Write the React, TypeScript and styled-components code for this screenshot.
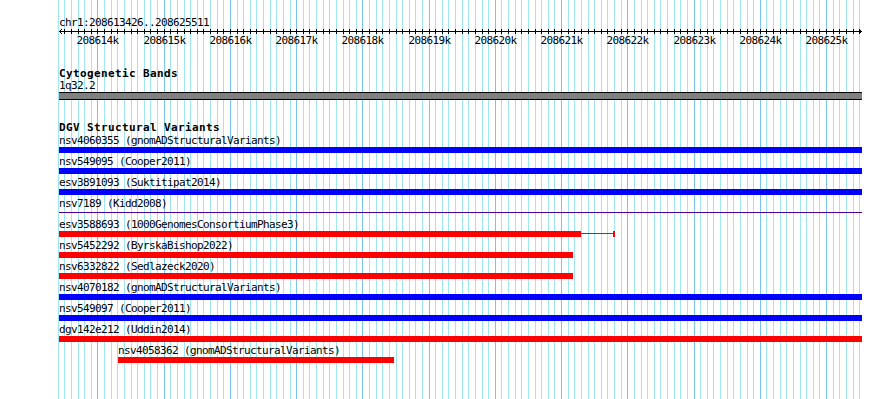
import React from "react";
import styled, { createGlobalStyle } from "styled-components";

const GlobalStyle = createGlobalStyle`
  html, body { margin: 0; padding: 0; background: #ffffff; }
  body { font-family: "DejaVu Sans Mono", "Liberation Mono", monospace; color: #000; }
`;

const VIEW_W = 890;
const VIEW_H = 399;
const TRACK_LEFT = 59;
const TRACK_W = 803;
const PX_PER_KB = 66.245;
const MAJOR0_X = 97.4; // x of 208614k
const bpToX = (bp: number) => MAJOR0_X + ((bp - 208614000) * PX_PER_KB) / 1000;

const gridStops: { x: number; major: boolean }[] = [];
for (let bp = 208613400; bp <= 208625500; bp += 100) {
  gridStops.push({ x: Math.round(bpToX(bp)), major: bp % 1000 === 0 });
}
const majors = gridStops.filter((g) => g.major);

type Feature = {
  name: string;
  src: string;
  kind: "blue" | "red" | "line";
  left: number;
  width: number;
  tail?: number;
};

const FULL = { left: 0, width: TRACK_W };
const features: Feature[] = [
  { name: "nsv4060355", src: "gnomADStructuralVariants", kind: "blue", ...FULL },
  { name: "nsv549095", src: "Cooper2011", kind: "blue", ...FULL },
  { name: "esv3891093", src: "Suktitipat2014", kind: "blue", ...FULL },
  { name: "nsv7189", src: "Kidd2008", kind: "line", ...FULL },
  { name: "esv3588693", src: "1000GenomesConsortiumPhase3", kind: "red", left: 0, width: 522, tail: 32 },
  { name: "nsv5452292", src: "ByrskaBishop2022", kind: "red", left: 0, width: 514 },
  { name: "nsv6332822", src: "Sedlazeck2020", kind: "red", left: 0, width: 514 },
  { name: "nsv4070182", src: "gnomADStructuralVariants", kind: "blue", ...FULL },
  { name: "nsv549097", src: "Cooper2011", kind: "blue", ...FULL },
  { name: "dgv142e212", src: "Uddin2014", kind: "red", ...FULL },
  { name: "nsv4058362", src: "gnomADStructuralVariants", kind: "red", left: 59, width: 276 },
];

const Canvas = styled.div`
  position: relative;
  width: ${VIEW_W}px;
  height: ${VIEW_H}px;
  overflow: hidden;
  background: #ffffff;
`;

const GridLayer = styled.svg`
  position: absolute;
  top: 0;
  left: 0;
  z-index: 0;
  display: block;
`;

const Tracks = styled.div`
  position: relative;
  z-index: 1;
  width: ${TRACK_W}px;
  padding-left: ${TRACK_LEFT}px;
  display: flex;
  flex-direction: column;
`;

const SmallText = styled.div<{ $lh?: number }>`
  font-family: "DejaVu Sans Mono", "Liberation Mono", monospace;
  font-size: 11px;
  letter-spacing: -0.6226px;
  line-height: ${(p) => p.$lh ?? 12}px;
  height: ${(p) => p.$lh ?? 12}px;
  white-space: nowrap;
  color: #000;
`;

const TrackTitle = styled.div<{ $mt: number }>`
  font-family: "DejaVu Sans Mono", "Liberation Mono", monospace;
  font-weight: bold;
  font-size: 11px;
  letter-spacing: 0.3774px;
  line-height: 12px;
  height: 12px;
  margin-top: ${(p) => p.$mt}px;
  white-space: nowrap;
`;

const RulerSection = styled.div`
  padding-top: 17px;
  display: flex;
  flex-direction: column;
`;

const Axis = styled.svg`
  display: block;
`;

const TickLabels = styled.div`
  position: relative;
  height: 11px;
`;

const TickLabel = styled(SmallText)`
  position: absolute;
  top: 0;
  transform: translateX(-50%);
`;

const BandBar = styled.div`
  height: 6px;
  width: ${TRACK_W}px;
  background: #808080;
  border-top: 1px solid #000;
  border-bottom: 1px solid #000;
`;

const FeatureRow = styled.div`
  display: flex;
  flex-direction: column;
  margin-bottom: 3px;
`;

const Glyph = styled.div`
  display: flex;
  align-items: flex-start;
  height: 6px;
`;

const Bar = styled.div<{ $color: string }>`
  height: 6px;
  background: ${(p) => p.$color};
  flex: none;
`;

const Hairline = styled.div<{ $color: string }>`
  height: 1px;
  margin-top: 2px;
  background: ${(p) => p.$color};
  flex: none;
`;

const EndCap = styled.div<{ $color: string }>`
  width: 2px;
  height: 6px;
  background: ${(p) => p.$color};
  flex: none;
`;

const COLORS = { blue: "#0000ff", red: "#ff0000", line: "#500090" };

function Grid() {
  return (
    <GridLayer width={VIEW_W} height={VIEW_H} shapeRendering="crispEdges">
      {gridStops.map((g, i) => (
        <rect key={i} x={g.x} y={0} width={1} height={VIEW_H} fill={g.major ? "#78c4f0" : "#9fe6ee"} />
      ))}
    </GridLayer>
  );
}

function Ruler() {
  const ticks = gridStops.filter((g) => g.x >= TRACK_LEFT + 2 && g.x <= TRACK_LEFT + TRACK_W - 3);
  const r = TRACK_W - 1;
  return (
    <RulerSection>
      <SmallText $lh={11}>chr1:208613426..208625511</SmallText>
      <Axis width={TRACK_W} height={7} shapeRendering="crispEdges">
        <rect x={0} y={3} width={TRACK_W} height={1} fill="#000" />
        {ticks.map((t, i) => (
          <rect key={i} x={t.x - TRACK_LEFT} y={1} width={1} height={5} fill="#000" />
        ))}
        <rect x={1} y={2} width={1} height={1} fill="#000" />
        <rect x={1} y={4} width={1} height={1} fill="#000" />
        <rect x={2} y={1} width={1} height={1} fill="#000" />
        <rect x={2} y={5} width={1} height={1} fill="#000" />
        <rect x={r - 1} y={2} width={1} height={1} fill="#000" />
        <rect x={r - 1} y={4} width={1} height={1} fill="#000" />
        <rect x={r - 2} y={1} width={1} height={1} fill="#000" />
        <rect x={r - 2} y={5} width={1} height={1} fill="#000" />
      </Axis>
      <TickLabels>
        {majors.map((m, i) => (
          <TickLabel key={i} $lh={11} style={{ left: m.x - TRACK_LEFT + 0.5 }}>
            {`${208614 + i}k`}
          </TickLabel>
        ))}
      </TickLabels>
    </RulerSection>
  );
}

function FeatureGlyph({ f }: { f: Feature }) {
  const color = COLORS[f.kind];
  if (f.kind === "line") {
    return (
      <Glyph>
        <Hairline $color={color} style={{ width: f.width }} />
      </Glyph>
    );
  }
  return (
    <Glyph>
      <Bar $color={color} style={{ width: f.width }} />
      {f.tail ? (
        <>
          <Hairline $color={color} style={{ width: f.tail }} />
          <EndCap $color={color} />
        </>
      ) : null}
    </Glyph>
  );
}

export default function App() {
  return (
    <>
      <GlobalStyle />
      <Canvas>
        <Grid />
        <Tracks>
          <Ruler />
          <TrackTitle $mt={22}>Cytogenetic Bands</TrackTitle>
          <SmallText>1q32.2</SmallText>
          <BandBar />
          <TrackTitle $mt={22} style={{ marginBottom: 1 }}>
            DGV Structural Variants
          </TrackTitle>
          {features.map((f) => (
            <FeatureRow key={f.name} style={{ marginLeft: f.left }}>
              <SmallText>{`${f.name} (${f.src})`}</SmallText>
              <FeatureGlyph f={f} />
            </FeatureRow>
          ))}
        </Tracks>
      </Canvas>
    </>
  );
}
